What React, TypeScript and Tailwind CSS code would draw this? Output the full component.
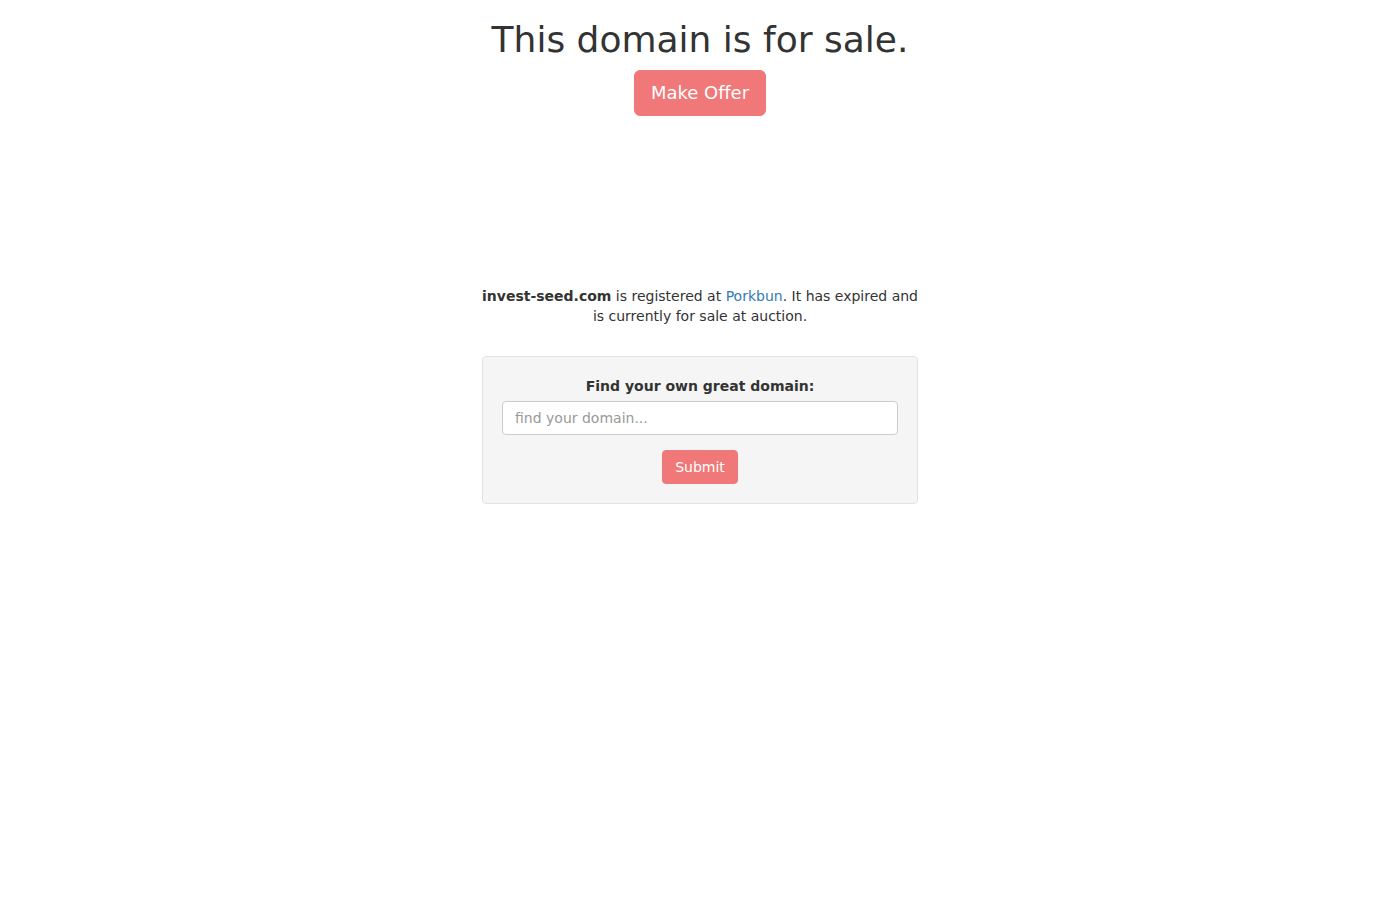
import React from "react";

export default function App() {
  return (
    <div
      className="min-h-[900px] bg-white text-[#333333] text-[14px] leading-[20px]"
      style={{ fontFamily: '"DejaVu Sans", sans-serif' }}
    >
      <div className="flex flex-col items-center">
        <h1 className="mt-[20px] mb-[10px] text-[36px] leading-[39.6px] font-normal text-[#333333]">
          This domain is for sale.
        </h1>
        <button className="h-[46px] px-[16px] text-[18px] leading-[24px] text-white bg-[#f07878] border border-[#f07878] rounded-[6px]">
          Make Offer
        </button>
        <div className="h-[170px]" />
        <div className="w-[436px] text-center">
          <p className="m-0">
            <strong className="font-bold">invest-seed.com</strong> is registered at{" "}
            <a className="text-[#337ab7] no-underline" href="#">
              Porkbun
            </a>
            . It has expired and is currently for sale at auction.
          </p>
          <div className="mt-[30px] bg-[#f5f5f5] border border-[#e3e3e3] rounded-[4px] p-[19px] flex flex-col items-center">
            <label className="font-bold mb-[5px] leading-[20px]">
              Find your own great domain:
            </label>
            <input
              className="w-full h-[34px] px-[12px] py-[6px] text-[14px] leading-[20px] bg-white border border-[#cccccc] rounded-[4px] text-[#555555] placeholder:text-[#999999] outline-none"
              placeholder="find your domain..."
            />
            <button className="mt-[15px] h-[34px] px-[12px] text-[14px] leading-[20px] text-white bg-[#f07878] border border-[#f07878] rounded-[4px]">
              Submit
            </button>
          </div>
        </div>
      </div>
    </div>
  );
}
